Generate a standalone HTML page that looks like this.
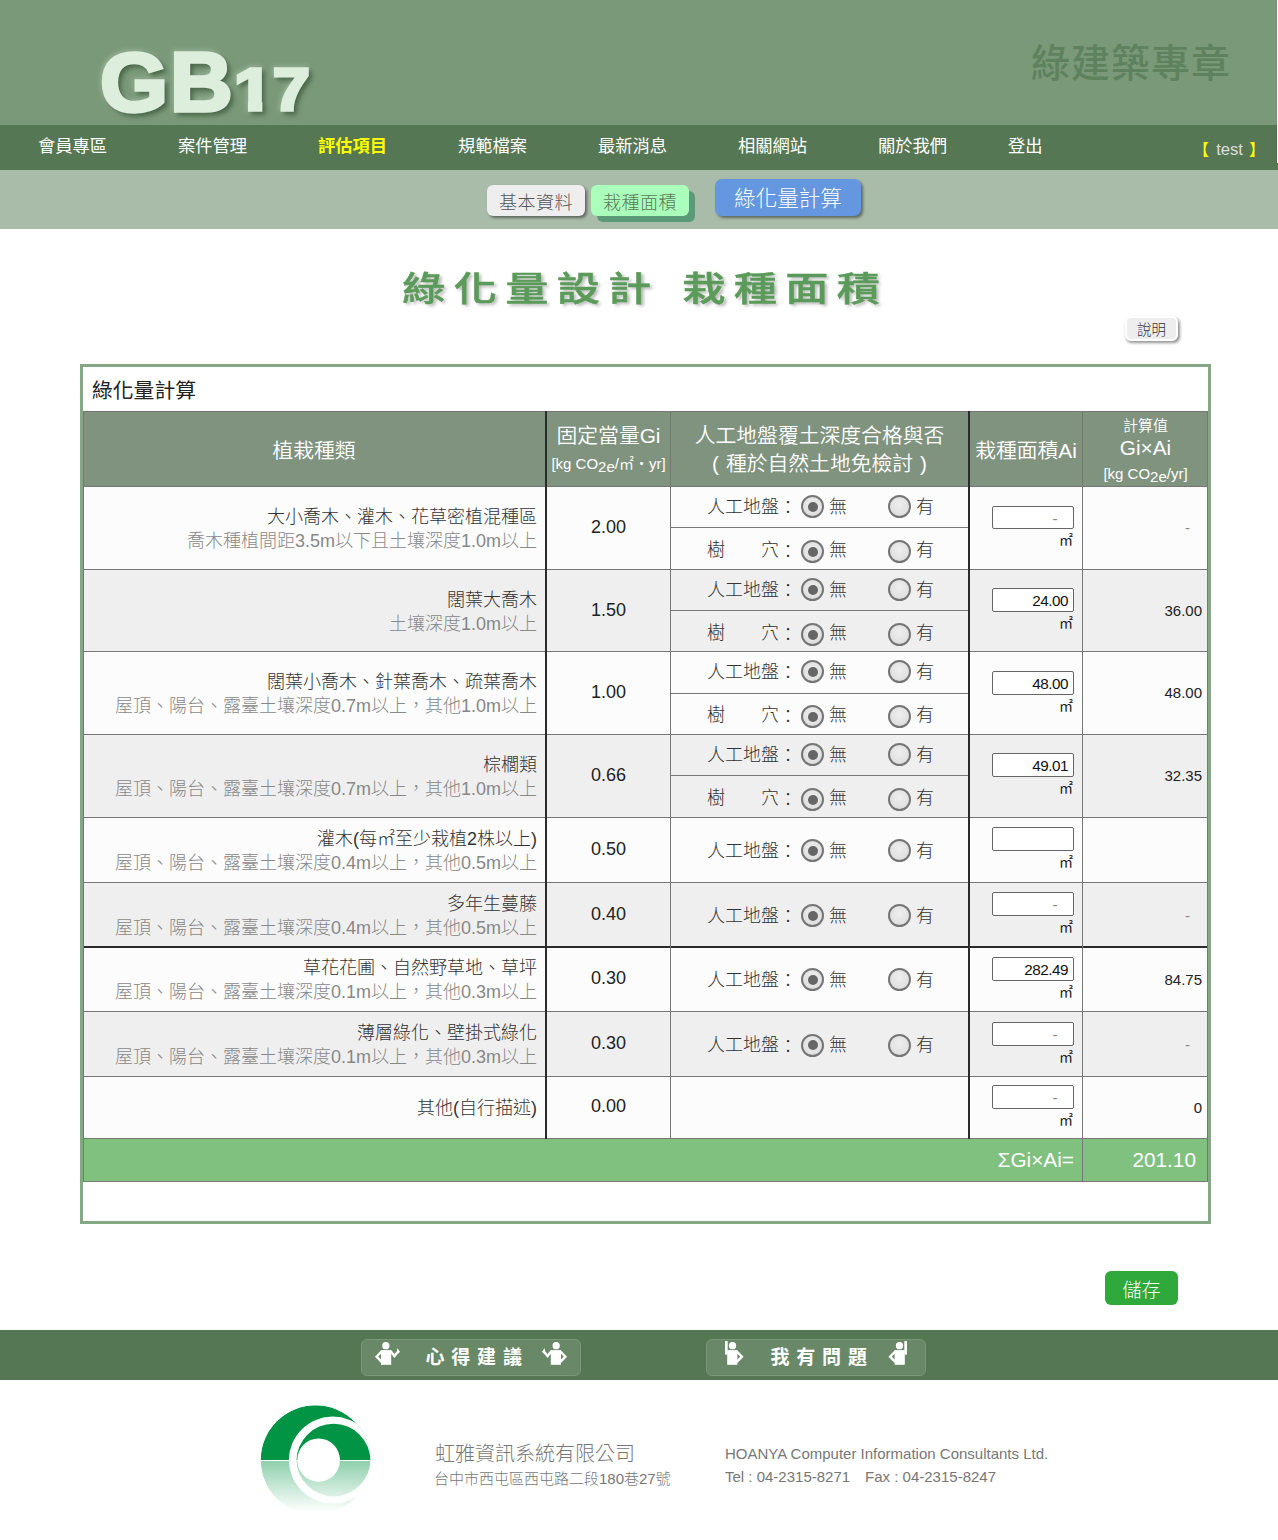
<!DOCTYPE html>
<html lang="zh-Hant"><head><meta charset="utf-8"><title>綠化量設計 栽種面積</title>
<style>
html,body{margin:0;padding:0}
body{width:1278px;height:1540px;position:relative;overflow:hidden;background:#fff;color:#333;
 font-family:"Liberation Sans","Noto Sans CJK TC",sans-serif;font-size:16px;font-weight:300}
div,span,a{box-sizing:border-box}
.a{position:absolute;white-space:nowrap}
.hd{left:0;top:0;width:1277px;height:125px;background:#7a9979}
.nav{left:0;top:125px;width:1278px;height:45px;background:#567754}
.sub{left:0;top:170px;width:1278px;height:59px;background:#a9bba9}
.strip{left:1277px;top:0;width:1px;height:163px;background:#fff}
.logo{left:0;top:0;width:400px;height:125px;font-weight:bold;color:#ddeedd;
 filter:drop-shadow(3px 3px 2.5px rgba(40,70,40,.7)) drop-shadow(-1px -1px 2.5px rgba(225,245,225,.35))}
.logo span{position:absolute;display:block;line-height:90px;height:90px;transform-origin:0 0;-webkit-text-stroke:3.5px #ddeedd}
.lg{font-size:83px;top:37.5px;left:100px;transform:scaleX(1.055)}
.lb2{font-size:83px;top:37.5px;left:169.5px;transform:scaleX(1.045)}
.l1{font-size:60px;top:45px;left:233.5px;transform:scaleX(1.16);clip-path:polygon(0 0,24.5px 0,24.5px 100%,12px 100%,12px 50px,0 50px)}
.l7{font-size:60px;top:45px;left:272.5px;transform:scaleX(1.1)}
.ttl{left:1031px;top:36px;height:56px;line-height:56px;font-size:39px;font-weight:500;color:#5e825d;letter-spacing:1px}
.ni{top:125px;height:45px;line-height:42px;font-size:17.3px;color:#fff;font-weight:400}
.ni.on{color:#ff0;font-weight:bold}
.usr{top:127px;height:45px;line-height:45px;font-size:16px;color:#ddd}
.usr b{color:#ff0;font-weight:normal}
.b1{top:185px;height:31px;line-height:36px;font-size:18px;border-radius:6px;text-align:center}
.h1{left:6px;top:259px;width:1278px;height:60px;line-height:60px;text-align:center}
.h1 span{display:inline-block;font-size:34px;font-weight:500;-webkit-text-stroke:.5px #5a9b5a;color:#5a9b5a;letter-spacing:6.5px;word-spacing:2px;transform:scaleX(1.27);
 text-shadow:2px 2px 3px rgba(0,0,0,.3)}
.box{left:80px;top:364px;width:1131px;height:860px;border:3px solid #85a884;background:#fff}
.cap{left:92px;top:367px;height:44px;line-height:47px;font-size:20.8px;color:#222;font-weight:400}
.th{background:#80937f;color:#fff;text-align:center}
.ln{background:#777}
.dk{background:#2b2b2b}
.r0{background:#fcfcfc}
.r1{background:#efefef}
.t1{left:83px;width:454px;text-align:right;font-size:18px;height:25px;line-height:25px;color:#333}
.t2{left:83px;width:454px;text-align:right;font-size:18px;height:25px;line-height:25px;color:#888}
.gi{left:547px;width:123px;text-align:center;font-size:18px;height:30px;line-height:30px;color:#222}
.lb{left:707px;font-size:18px;height:30px;line-height:30px;color:#333}
.rd{width:23px;height:23px;border-radius:50%;border:2px solid #757575;background:radial-gradient(circle at 50% 40%,#eee 0,#e2e2e2 60%,#d6d6d6 100%)}
.rd.on:after{content:"";position:absolute;left:4.5px;top:4.5px;width:10px;height:10px;border-radius:50%;background:#666}
.in{left:992px;width:82px;height:23px;border:1px solid #666;border-radius:2px;background:#fff;font-size:15.3px;line-height:24px;text-align:right;padding-right:5px;letter-spacing:-.5px;color:#111}
.m2{left:1040px;width:33px;text-align:right;font-size:14px;height:16px;line-height:16px;color:#222;font-weight:400}
.cv{left:1083px;width:119px;text-align:right;font-size:15px;height:20px;line-height:21px;color:#222}
.pw{display:inline-block;width:20.8px;text-align:center}
.cl{position:relative;top:1.5px}
.sum{background:#80c180;color:#fff;font-size:20.8px}
</style></head><body>
<div class="a hd"></div><div class="a nav"></div><div class="a sub"></div><div class="a strip"></div><div class="a" style="left:1276px;top:0;width:1px;height:125px;background:#6f946e"></div><div class="a" style="left:1276px;top:125px;width:1px;height:39px;background:#4c704b"></div>
<div class="a logo"><span class="lg">G</span><span class="lb2">B</span><span class="l1">1</span><span class="l7">7</span></div>
<div class="a ttl">綠建築專章</div>
<a class="a ni" style="left:38px">會員專區</a>
<a class="a ni" style="left:178px">案件管理</a>
<a class="a ni on" style="left:318px">評估項目</a>
<a class="a ni" style="left:458px">規範檔案</a>
<a class="a ni" style="left:598px">最新消息</a>
<a class="a ni" style="left:738px">相關網站</a>
<a class="a ni" style="left:878px">關於我們</a>
<a class="a ni" style="left:1008px">登出</a>
<div class="a usr" style="left:1193px"><b>【</b><span style="font-size:16.6px;margin:0 1.5px 0 2.5px"> test </span><b>】</b></div>
<a class="a b1" style="left:487px;width:98px;background:#eee;color:#555;box-shadow:2px 2px 3px rgba(0,0,0,.45);letter-spacing:.5px">基本資料</a>
<a class="a b1" style="left:591px;width:98px;background:#aaffbb;color:#5a7a5a;box-shadow:6px 6px 0 #5a9a78;letter-spacing:.5px">栽種面積</a>
<a class="a b1" style="left:715px;top:179px;width:146px;height:37px;line-height:41px;font-size:21.5px;background:#6497e0;color:#fff;box-shadow:2px 2px 3px rgba(0,0,0,.45);border-radius:7px">綠化量計算</a>
<div class="a h1"><span>綠化量設計 栽種面積</span></div>
<a class="a" style="left:1125px;top:316px;width:53px;height:25px;line-height:24px;font-size:14.5px;text-align:center;background:#eee;color:#333;border:2px solid #fff;border-radius:6px;box-shadow:1.5px 2px 3px rgba(0,0,0,.42)">說明</a>
<div class="a box"></div>
<div class="a cap">綠化量計算</div>
<div class="a th" style="left:83px;top:411px;width:1125px;height:76px"></div>
<div class="a" style="left:83px;width:462px;top:435.5px;height:30px;line-height:30px;font-size:20.8px;color:#fff;text-align:center;font-weight:350">植栽種類</div>
<div class="a" style="left:547px;width:123px;top:421px;height:30px;line-height:30px;font-size:20.8px;color:#fff;text-align:center;font-weight:350">固定當量Gi</div>
<div class="a" style="left:547px;width:123px;top:449px;height:30px;line-height:30px;font-size:15px;color:#fff;text-align:center;font-weight:350">[kg CO<sub style="font-size:15px;vertical-align:-3px;line-height:0">2e</sub>/㎡‧yr]</div>
<div class="a" style="left:671px;width:297px;top:421px;height:30px;line-height:30px;font-size:20.8px;color:#fff;text-align:center;font-weight:350">人工地盤覆土深度合格與否</div>
<div class="a" style="left:671px;width:297px;top:449px;height:30px;line-height:30px;font-size:20.8px;color:#fff;text-align:center;font-weight:350"><span class="pw">(</span>種於自然土地免檢討<span class="pw">)</span></div>
<div class="a" style="left:970px;width:112px;top:435.5px;height:30px;line-height:30px;font-size:20.8px;color:#fff;text-align:center;font-weight:350">栽種面積Ai</div>
<div class="a" style="left:1083px;width:125px;top:410.5px;height:30px;line-height:30px;font-size:15px;color:#fff;text-align:center;font-weight:350">計算值</div>
<div class="a" style="left:1083px;width:125px;top:433px;height:30px;line-height:30px;font-size:20.8px;color:#fff;text-align:center;font-weight:350">Gi×Ai</div>
<div class="a" style="left:1083px;width:125px;top:458.5px;height:30px;line-height:30px;font-size:15px;color:#fff;text-align:center;font-weight:350">[kg CO<sub style="font-size:15px;vertical-align:-3px;line-height:0">2e</sub>/yr]</div>
<div class="a r0" style="left:83px;top:487px;width:1125px;height:82px"></div>
<div class="a ln" style="left:83px;top:569px;width:1125px;height:1px"></div>
<div class="a t1" style="top:504.5px">大小喬木、灌木、花草密植混種區</div>
<div class="a t2" style="top:528.5px">喬木種植間距3.5m以下且土壤深度1.0m以上</div>
<div class="a gi" style="top:511.5px">2.00</div>
<div class="a ln" style="left:671px;top:527px;width:297px;height:1px"></div>
<div class="a lb" style="top:491.5px">人工地盤<span class="cl">：</span></div>
<div class="a rd on" style="left:801px;top:495.0px"></div>
<div class="a lb" style="left:829px;top:491.5px">無</div>
<div class="a rd" style="left:888px;top:495.0px"></div>
<div class="a lb" style="left:916px;top:491.5px">有</div>
<div class="a lb" style="top:535.0px">樹　　穴<span class="cl">：</span></div>
<div class="a rd on" style="left:801px;top:540.0px"></div>
<div class="a lb" style="left:829px;top:535.0px">無</div>
<div class="a rd" style="left:888px;top:540.0px"></div>
<div class="a lb" style="left:916px;top:535.0px">有</div>
<div class="a in" style="top:506px;height:23px;color:#888;padding-right:16px">-</div>
<div class="a m2" style="top:531.5px">㎡</div>
<div class="a cv" style="top:517.2px;color:#888;padding-right:12px">-</div>
<div class="a r1" style="left:83px;top:570px;width:1125px;height:81px"></div>
<div class="a ln" style="left:83px;top:651px;width:1125px;height:1px"></div>
<div class="a t1" style="top:587.5px">闊葉大喬木</div>
<div class="a t2" style="top:611.5px">土壤深度1.0m以上</div>
<div class="a gi" style="top:594.5px">1.50</div>
<div class="a ln" style="left:671px;top:610px;width:297px;height:1px"></div>
<div class="a lb" style="top:574.5px">人工地盤<span class="cl">：</span></div>
<div class="a rd on" style="left:801px;top:578.0px"></div>
<div class="a lb" style="left:829px;top:574.5px">無</div>
<div class="a rd" style="left:888px;top:578.0px"></div>
<div class="a lb" style="left:916px;top:574.5px">有</div>
<div class="a lb" style="top:618.0px">樹　　穴<span class="cl">：</span></div>
<div class="a rd on" style="left:801px;top:623.0px"></div>
<div class="a lb" style="left:829px;top:618.0px">無</div>
<div class="a rd" style="left:888px;top:623.0px"></div>
<div class="a lb" style="left:916px;top:618.0px">有</div>
<div class="a in" style="top:588px;height:24px">24.00</div>
<div class="a m2" style="top:614.5px">㎡</div>
<div class="a cv" style="top:600.2px">36.00</div>
<div class="a r0" style="left:83px;top:652px;width:1125px;height:82px"></div>
<div class="a ln" style="left:83px;top:734px;width:1125px;height:1px"></div>
<div class="a t1" style="top:669.5px">闊葉小喬木、針葉喬木、疏葉喬木</div>
<div class="a t2" style="top:693.5px">屋頂、陽台、露臺土壤深度0.7m以上，其他1.0m以上</div>
<div class="a gi" style="top:676.5px">1.00</div>
<div class="a ln" style="left:671px;top:693px;width:297px;height:1px"></div>
<div class="a lb" style="top:656.5px">人工地盤<span class="cl">：</span></div>
<div class="a rd on" style="left:801px;top:660.0px"></div>
<div class="a lb" style="left:829px;top:656.5px">無</div>
<div class="a rd" style="left:888px;top:660.0px"></div>
<div class="a lb" style="left:916px;top:656.5px">有</div>
<div class="a lb" style="top:700.0px">樹　　穴<span class="cl">：</span></div>
<div class="a rd on" style="left:801px;top:705.0px"></div>
<div class="a lb" style="left:829px;top:700.0px">無</div>
<div class="a rd" style="left:888px;top:705.0px"></div>
<div class="a lb" style="left:916px;top:700.0px">有</div>
<div class="a in" style="top:671px;height:24px">48.00</div>
<div class="a m2" style="top:697.5px">㎡</div>
<div class="a cv" style="top:682.2px">48.00</div>
<div class="a r1" style="left:83px;top:735px;width:1125px;height:82px"></div>
<div class="a ln" style="left:83px;top:817px;width:1125px;height:1px"></div>
<div class="a t1" style="top:752.5px">棕櫚類</div>
<div class="a t2" style="top:776.5px">屋頂、陽台、露臺土壤深度0.7m以上，其他1.0m以上</div>
<div class="a gi" style="top:759.5px">0.66</div>
<div class="a ln" style="left:671px;top:775px;width:297px;height:1px"></div>
<div class="a lb" style="top:739.5px">人工地盤<span class="cl">：</span></div>
<div class="a rd on" style="left:801px;top:743.0px"></div>
<div class="a lb" style="left:829px;top:739.5px">無</div>
<div class="a rd" style="left:888px;top:743.0px"></div>
<div class="a lb" style="left:916px;top:739.5px">有</div>
<div class="a lb" style="top:783.0px">樹　　穴<span class="cl">：</span></div>
<div class="a rd on" style="left:801px;top:788.0px"></div>
<div class="a lb" style="left:829px;top:783.0px">無</div>
<div class="a rd" style="left:888px;top:788.0px"></div>
<div class="a lb" style="left:916px;top:783.0px">有</div>
<div class="a in" style="top:753px;height:24px">49.01</div>
<div class="a m2" style="top:779.5px">㎡</div>
<div class="a cv" style="top:765.2px">32.35</div>
<div class="a r0" style="left:83px;top:818px;width:1125px;height:64px"></div>
<div class="a ln" style="left:83px;top:882px;width:1125px;height:1px"></div>
<div class="a t1" style="top:826.7px">灌木(每㎡至少栽植2株以上)</div>
<div class="a t2" style="top:850.8px">屋頂、陽台、露臺土壤深度0.4m以上，其他0.5m以上</div>
<div class="a gi" style="top:833.6px">0.50</div>
<div class="a lb" style="top:835.5px">人工地盤<span class="cl">：</span></div>
<div class="a rd on" style="left:801px;top:839.0px"></div>
<div class="a lb" style="left:829px;top:835.5px">無</div>
<div class="a rd" style="left:888px;top:839.0px"></div>
<div class="a lb" style="left:916px;top:835.5px">有</div>
<div class="a in" style="top:827px;height:24px"></div>
<div class="a m2" style="top:853.5px">㎡</div>
<div class="a cv" style="top:840.4px"></div>
<div class="a r1" style="left:83px;top:883px;width:1125px;height:63px"></div>
<div class="a dk" style="left:83px;top:946px;width:1125px;height:2px"></div>
<div class="a t1" style="top:891.7px">多年生蔓藤</div>
<div class="a t2" style="top:915.8px">屋頂、陽台、露臺土壤深度0.4m以上，其他0.5m以上</div>
<div class="a gi" style="top:898.6px">0.40</div>
<div class="a lb" style="top:900.5px">人工地盤<span class="cl">：</span></div>
<div class="a rd on" style="left:801px;top:904.0px"></div>
<div class="a lb" style="left:829px;top:900.5px">無</div>
<div class="a rd" style="left:888px;top:904.0px"></div>
<div class="a lb" style="left:916px;top:900.5px">有</div>
<div class="a in" style="top:892px;height:24px;color:#888;padding-right:16px">-</div>
<div class="a m2" style="top:918.5px">㎡</div>
<div class="a cv" style="top:905.4px;color:#888;padding-right:12px">-</div>
<div class="a r0" style="left:83px;top:948px;width:1125px;height:63px"></div>
<div class="a ln" style="left:83px;top:1011px;width:1125px;height:1px"></div>
<div class="a t1" style="top:955.5px">草花花圃、自然野草地、草坪</div>
<div class="a t2" style="top:980.0px">屋頂、陽台、露臺土壤深度0.1m以上，其他0.3m以上</div>
<div class="a gi" style="top:962.6px">0.30</div>
<div class="a lb" style="top:964.5px">人工地盤<span class="cl">：</span></div>
<div class="a rd on" style="left:801px;top:968.0px"></div>
<div class="a lb" style="left:829px;top:964.5px">無</div>
<div class="a rd" style="left:888px;top:968.0px"></div>
<div class="a lb" style="left:916px;top:964.5px">有</div>
<div class="a in" style="top:957px;height:24px">282.49</div>
<div class="a m2" style="top:983.5px">㎡</div>
<div class="a cv" style="top:969.4px">84.75</div>
<div class="a r1" style="left:83px;top:1012px;width:1125px;height:64px"></div>
<div class="a ln" style="left:83px;top:1076px;width:1125px;height:1px"></div>
<div class="a t1" style="top:1020.7px">薄層綠化、壁掛式綠化</div>
<div class="a t2" style="top:1044.8px">屋頂、陽台、露臺土壤深度0.1m以上，其他0.3m以上</div>
<div class="a gi" style="top:1027.6px">0.30</div>
<div class="a lb" style="top:1030px">人工地盤<span class="cl">：</span></div>
<div class="a rd on" style="left:801px;top:1033.5px"></div>
<div class="a lb" style="left:829px;top:1030px">無</div>
<div class="a rd" style="left:888px;top:1033.5px"></div>
<div class="a lb" style="left:916px;top:1030px">有</div>
<div class="a in" style="top:1022px;height:24px;color:#888;padding-right:16px">-</div>
<div class="a m2" style="top:1048.5px">㎡</div>
<div class="a cv" style="top:1034.4px;color:#888;padding-right:12px">-</div>
<div class="a r0" style="left:83px;top:1077px;width:1125px;height:61px"></div>
<div class="a ln" style="left:83px;top:1138px;width:1125px;height:1px"></div>
<div class="a t1" style="top:1096.2px">其他(自行描述)</div>
<div class="a gi" style="top:1091.3px">0.00</div>
<div class="a in" style="top:1085px;height:24px;color:#888;padding-right:16px">-</div>
<div class="a m2" style="top:1111.5px">㎡</div>
<div class="a cv" style="top:1097.1px">0</div>
<div class="a sum" style="left:83px;top:1139px;width:1125px;height:42px"></div>
<div class="a ln" style="left:83px;top:1181px;width:1125px;height:1px"></div>
<div class="a" style="left:900px;width:174px;top:1139px;height:42px;line-height:42px;text-align:right;color:#fff;font-size:20.8px">ΣGi×Ai=</div>
<div class="a" style="left:1083px;width:113px;top:1139px;height:42px;line-height:42px;text-align:right;color:#fff;font-size:20.8px">201.10</div>
<div class="a ln" style="left:83px;top:411px;width:1125px;height:1px"></div>
<div class="a ln" style="left:83px;top:486px;width:1125px;height:1px"></div>
<div class="a ln" style="left:83px;top:411px;width:1px;height:771px"></div>
<div class="a ln" style="left:1207px;top:411px;width:1px;height:771px"></div>
<div class="a dk" style="left:545px;top:411px;width:2px;height:728px"></div>
<div class="a ln" style="left:670px;top:411px;width:1px;height:728px"></div>
<div class="a dk" style="left:968px;top:411px;width:2px;height:728px"></div>
<div class="a ln" style="left:1082px;top:411px;width:1px;height:771px"></div>
<a class="a" style="left:1105px;top:1271px;width:73px;height:34px;line-height:39px;font-size:19px;text-align:center;background:#2fa83c;color:#fff;border-radius:6px">儲存</a>
<div class="a" style="left:0;top:1330px;width:1278px;height:50px;background:#567754"></div>
<div class="a" style="left:361px;top:1339px;width:220px;height:37px;border:1px solid #7a9878;background:#688867;border-radius:6px"></div>
<div class="a" style="left:425.5px;top:1339px;height:37px;line-height:37px;color:#fff;font-weight:bold;font-size:19px;letter-spacing:6.8px">心得建議</div>
<svg class="a" style="left:368px;top:1336px" width="40" height="36" viewBox="0 0 40 36"><g fill="#fff"><circle cx="17.85" cy="9.7" r="3.65"/><rect x="13" y="14.1" width="10.2" height="14.7"/><polygon points="28.9,15.2 29.4,12.0 31.9,15.8 30.6,17.4"/></g><g fill="none" stroke="#fff" stroke-width="2.4"><polyline points="14.0,15.0 8.6,20.7 13.6,25.8"/><polyline points="22.3,14.8 26.4,20.1 30.6,15.0"/></g></svg>
<svg class="a" style="left:534.0px;top:1336px" width="40" height="36" viewBox="0 0 40 36"><g transform="translate(40,0) scale(-1,1)"><g fill="#fff"><circle cx="17.85" cy="9.7" r="3.65"/><rect x="13" y="14.1" width="10.2" height="14.7"/><polygon points="28.9,15.2 29.4,12.0 31.9,15.8 30.6,17.4"/></g><g fill="none" stroke="#fff" stroke-width="2.4"><polyline points="14.0,15.0 8.6,20.7 13.6,25.8"/><polyline points="22.3,14.8 26.4,20.1 30.6,15.0"/></g></g></svg>
<div class="a" style="left:706px;top:1339px;width:220px;height:37px;border:1px solid #7a9878;background:#688867;border-radius:6px"></div>
<div class="a" style="left:770.5px;top:1339px;height:37px;line-height:37px;color:#fff;font-weight:bold;font-size:19px;letter-spacing:6.8px">我有問題</div>
<svg class="a" style="left:715px;top:1336px" width="40" height="36" viewBox="0 0 40 36"><g fill="#fff"><circle cx="17.5" cy="9.7" r="3.65"/><rect x="12.2" y="14.1" width="10.2" height="14.7"/><rect x="10" y="5" width="2.7" height="13.8" rx=".8"/></g><g fill="none" stroke="#fff" stroke-width="2.4"><polyline points="21.4,15.0 26.9,20.7 21.8,25.8"/></g></svg>
<svg class="a" style="left:877.0px;top:1336px" width="40" height="36" viewBox="0 0 40 36"><g transform="translate(40,0) scale(-1,1)"><g fill="#fff"><circle cx="17.5" cy="9.7" r="3.65"/><rect x="12.2" y="14.1" width="10.2" height="14.7"/><rect x="10" y="5" width="2.7" height="13.8" rx=".8"/></g><g fill="none" stroke="#fff" stroke-width="2.4"><polyline points="21.4,15.0 26.9,20.7 21.8,25.8"/></g></g></svg>
<div class="a" style="left:435px;top:1439px;height:30px;line-height:30px;font-size:20px;color:#777">虹雅資訊系統有限公司</div>
<div class="a" style="left:434px;top:1467px;height:24px;line-height:24px;font-size:15px;color:#777">台中市西屯區西屯路二段180巷27號</div>
<div class="a" style="left:725px;top:1442px;height:24px;line-height:24px;font-size:15px;color:#777">HOANYA Computer Information Consultants Ltd.</div>
<div class="a" style="left:725px;top:1465px;height:24px;line-height:24px;font-size:15px;color:#777">Tel : 04-2315-8271　Fax : 04-2315-8247</div>
<svg class="a" style="left:255px;top:1400px" width="125" height="125" viewBox="0 0 125 125">
<defs>
<clipPath id="up"><rect x="0" y="0" width="125" height="60"/></clipPath>
<clipPath id="c1"><circle cx="60.56" cy="60.1" r="54.9"/></clipPath>
<linearGradient id="fade" x1="0" y1="60" x2="0" y2="112" gradientUnits="userSpaceOnUse"><stop offset="0" stop-color="#fff" stop-opacity=".45"/><stop offset="1" stop-color="#fff" stop-opacity="0"/></linearGradient>
<mask id="m"><rect x="0" y="61" width="125" height="64" fill="url(#fade)"/></mask>
<g id="shape" clip-path="url(#c1)"><circle cx="60.56" cy="60.1" r="54.9" fill="#009444"/><circle cx="77.8" cy="60.6" r="44" fill="#fff"/><circle cx="78.5" cy="60.8" r="37" fill="#009444"/><circle cx="63.6" cy="59.8" r="21.3" fill="#fff"/></g>
</defs>
<use href="#shape" clip-path="url(#up)"/>
<g mask="url(#m)"><use href="#shape" transform="translate(0,120.2) scale(1,-1)"/></g>
</svg>
</body></html>
